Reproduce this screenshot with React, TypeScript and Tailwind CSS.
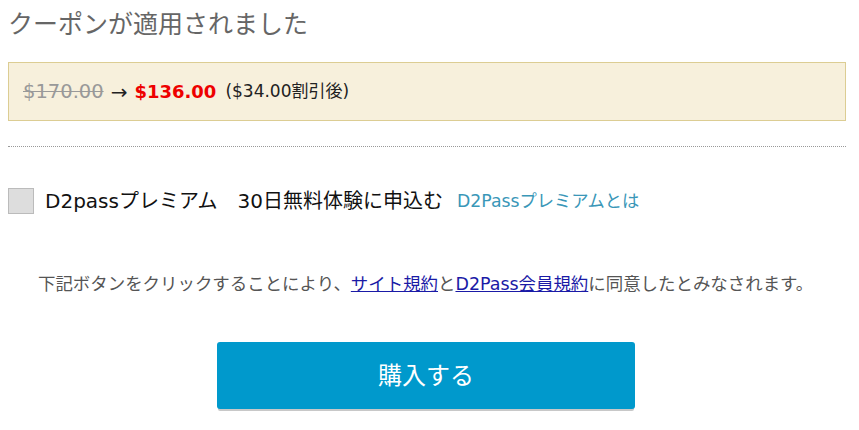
import React from 'react';

const jp = "font-['DejaVu_Sans','Noto_Sans_CJK_JP',sans-serif]";

export default function App() {
  return (
    <div className={`w-[859px] h-[430px] bg-white px-2 pt-[8px] ${jp}`}>
      <h2 className="text-[25px] leading-[34px] text-[#666] font-normal">クーポンが適用されました</h2>

      {/* 割引後の価格 */}
      <div className="mt-[20px] w-[838px] h-[59px] bg-[#f7f0dc] border border-[#dccd93] flex items-center px-[14px] text-[17px] text-[#222]">
        <span className="text-[#999] line-through text-[19.5px]">$170.00</span>
        <span className="mx-[7px] text-[20px]">→</span>
        <span className="text-[#e00] font-bold text-[18px]">$136.00</span>
        <span className="ml-[9px] text-[17px]">($34.00割引後)</span>
      </div>

      <div className="mt-[25px] w-[838px] border-t border-dotted border-[#999]" />

      <label className="mt-[41px] flex items-center leading-[26px]">
        <span className="w-[26px] h-[26px] bg-[#ddd] border border-[#bbb] shrink-0" />
        <span className="ml-[11px] text-[20px] text-[#111]">D2passプレミアム　30日無料体験に申込む</span>
        <a className="ml-[14px] text-[17.3px] text-[#3a97b8]">D2Passプレミアムとは</a>
      </label>

      <p className="mt-[57px] pl-[30px] text-[17.45px] leading-[26px] text-[#555]">
        下記ボタンをクリックすることにより、
        <a className="text-[#1a1aa6] underline">サイト規約</a>と
        <a className="text-[#1a1aa6] underline">D2Pass会員規約</a>
        に同意したとみなされます。
      </p>

      <div className="mt-[45px] flex justify-center pr-[7px]">
        <button className="w-[418px] h-[67px] rounded-[3px] bg-[#0099cc] text-white text-[24px] shadow-[0_3px_0_-1px_#c8c8c8]">
          購入する
        </button>
      </div>
    </div>
  );
}
